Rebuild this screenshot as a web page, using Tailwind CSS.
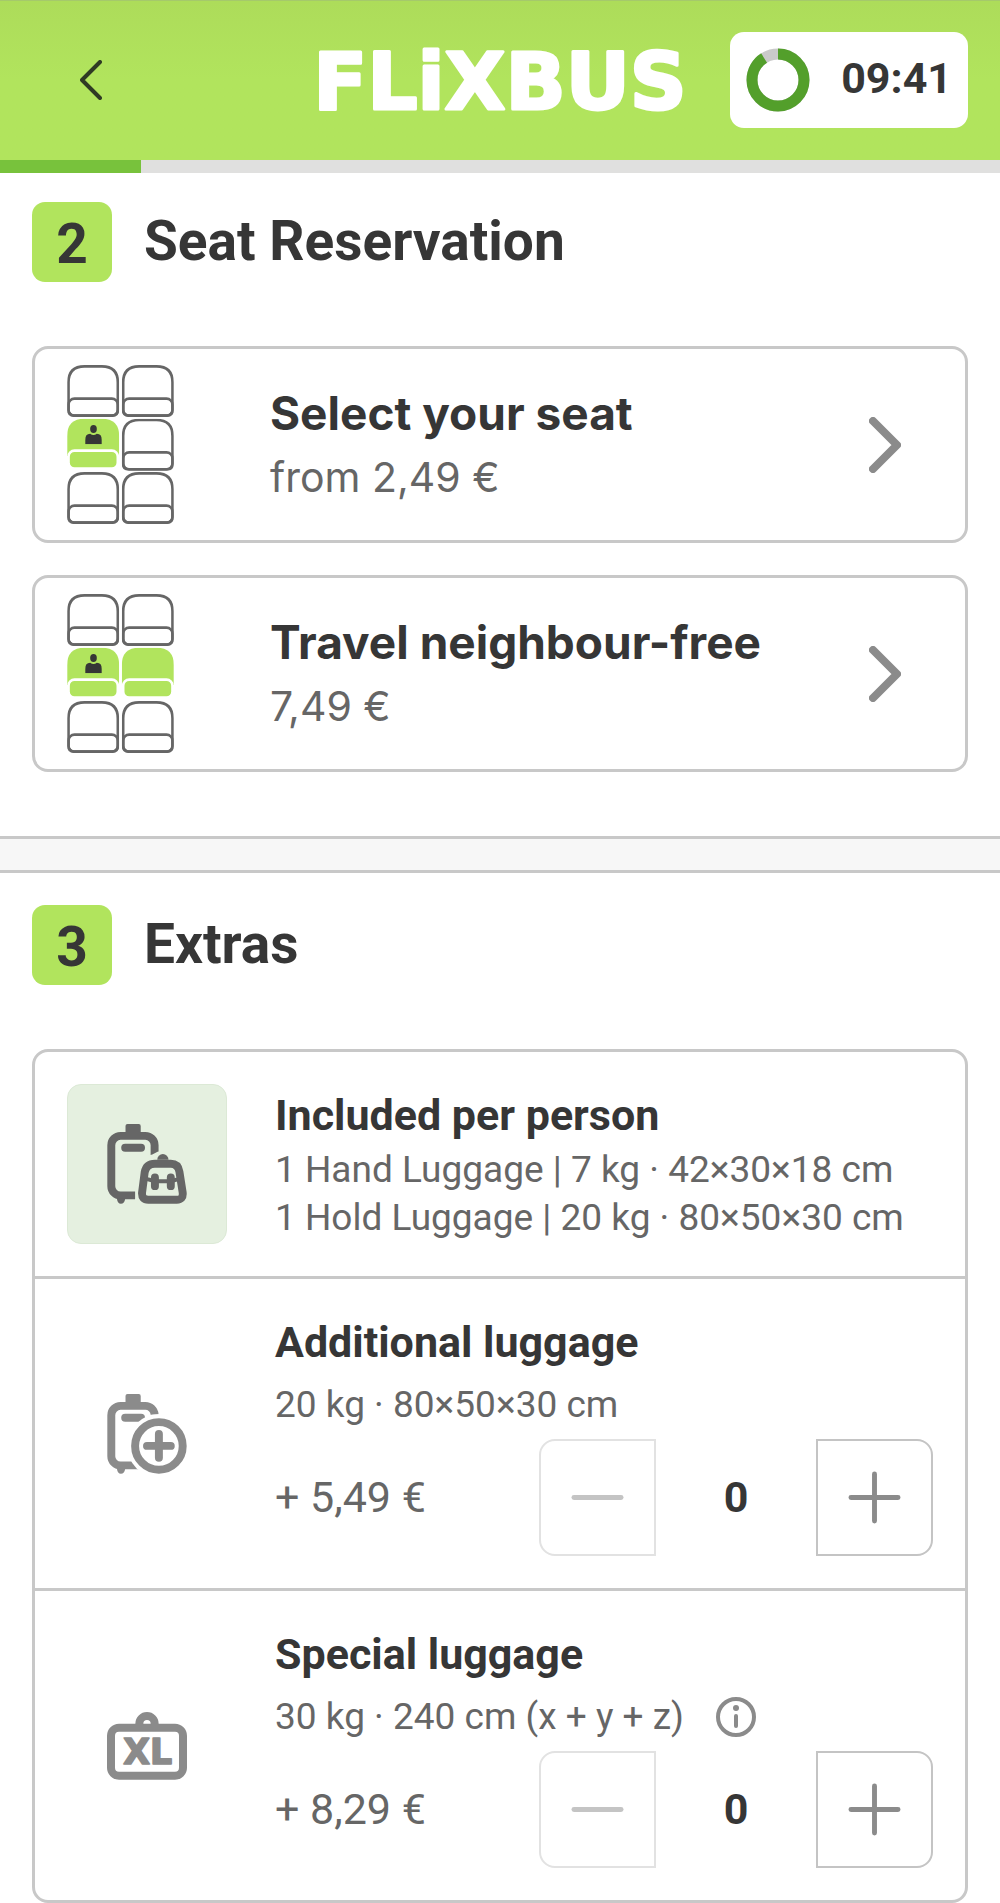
<!DOCTYPE html>
<html lang="en">
<head>
<meta charset="utf-8">
<meta name="viewport" content="width=device-width, initial-scale=1">
<title>FlixBus – Seat Reservation and Extras</title>
<script src="https://cdn.jsdelivr.net/npm/@tailwindcss/browser@4"></script>
</head>
<body class="bg-white font-[Roboto,sans-serif] text-[#363636]">

<!-- Shared drawings -->
<svg class="hidden" aria-hidden="true">
  <symbol id="seat" viewBox="0 0 156 156">
    <g fill="none" stroke="#666" stroke-width="8">
      <path d="M4 52Q4 4 52 4H104Q152 4 152 52V136Q152 152 136 152H20Q4 152 4 136Z"/>
      <rect x="4" y="101" width="148" height="51" rx="18"/>
    </g>
  </symbol>
  <symbol id="seat-taken" viewBox="0 0 156 156">
    <path d="M0 52Q0 0 52 0H104Q156 0 156 52V112H0Z" fill="#b1e45d"/>
    <rect x="4" y="96" width="148" height="54" rx="18" fill="#b1e45d" stroke="#fff" stroke-width="8"/>
  </symbol>
  <symbol id="person" viewBox="0 0 50 58">
    <ellipse cx="25" cy="12" rx="10" ry="12" fill="#363636"/>
    <path d="M0 58V45Q0 26 15 26Q25 34 35 26Q50 26 50 45V58Z" fill="#363636"/>
  </symbol>
</svg>

<header class="grid grid-cols-[1fr_auto_1fr] items-center border-t border-[#a5c96b] bg-[#b1e45d] bg-linear-to-b from-[#addc5a] to-[#b1e45d] to-50% px-8 pt-[31px] pb-8">
  <button type="button" aria-label="Back" class="flex w-fit items-center px-12 py-6">
    <svg class="h-10 w-[22px]" viewBox="0 0 22 40" fill="none" stroke="#2f3a24" stroke-width="4" stroke-linecap="round" stroke-linejoin="round"><path d="M20 2L2 20L20 38"/></svg>
  </button>
  <a href="#" aria-label="FlixBus">
    <svg class="h-24 w-[380px]" viewBox="0 0 380 96">
      <text x="190" y="77" text-anchor="middle" font-family="DejaVu Sans, sans-serif" font-weight="700" font-size="79" fill="#fff" stroke="#fff" stroke-width="3" stroke-linejoin="round">FLiXBUS</text>
    </svg>
  </a>
  <div class="flex h-24 w-[238px] items-center justify-between justify-self-end rounded-[14px] bg-white px-4">
    <svg class="size-16" viewBox="0 0 64 64" fill="none" stroke-width="11">
      <circle cx="32" cy="32" r="26" stroke="#cacaca"/>
      <circle cx="32" cy="32" r="26" stroke="#539f2b" pathLength="100" stroke-dasharray="91 9" transform="rotate(-90 32 32)"/>
    </svg>
    <span class="pb-1 text-[43px] leading-[48px] font-bold">09:41</span>
  </div>
</header>

<div class="h-[13px] bg-[#e0e0df]" role="progressbar" aria-label="Booking progress" aria-valuenow="14" aria-valuemin="0" aria-valuemax="100">
  <div class="h-full bg-[#78c23c]" style="width:14.1%"></div>
</div>

<main>
  <section class="px-8 pt-[29px] pb-16">
    <div class="mb-16 flex items-center gap-8">
      <span class="flex size-20 items-center justify-center rounded-[13px] bg-[#b1e45d] pt-1 text-[55px] leading-none font-bold">2</span>
      <h2 class="pb-0.5 text-[55px] leading-[64px] font-bold">Seat Reservation</h2>
    </div>
    <div class="flex flex-col gap-8">
      <button type="button" class="flex h-[197px] items-center rounded-2xl border-3 border-[#c8c8c8] pr-16 pl-8 text-left">
        <span class="w-[203px] shrink-0">
          <svg class="h-[159px] w-[107px]" viewBox="0 0 320 477">
            <use href="#seat" width="156" height="156"/>
            <use href="#seat" x="164" width="156" height="156"/>
            <use href="#seat-taken" y="161" width="156" height="156"/>
            <use href="#person" x="54" y="180" width="50" height="58"/>
            <use href="#seat" x="164" y="161" width="156" height="156"/>
            <use href="#seat" y="321" width="156" height="156"/>
            <use href="#seat" x="164" y="321" width="156" height="156"/>
          </svg>
        </span>
        <span class="flex flex-1 flex-col font-[Inter,sans-serif] leading-[64px]">
          <span class="text-[46px] font-bold">Select your seat</span>
          <span class="text-[41px] text-[#666]">from 2,49 €</span>
        </span>
        <svg class="h-14 w-8" viewBox="0 0 32 56" fill="none" stroke="#8b8b8b" stroke-width="8" stroke-linecap="round" stroke-linejoin="round"><path d="M4 4L28 28L4 52"/></svg>
      </button>
      <button type="button" class="flex h-[197px] items-center rounded-2xl border-3 border-[#c8c8c8] pr-16 pl-8 text-left">
        <span class="w-[203px] shrink-0">
          <svg class="h-[159px] w-[107px]" viewBox="0 0 320 477">
            <use href="#seat" width="156" height="156"/>
            <use href="#seat" x="164" width="156" height="156"/>
            <use href="#seat-taken" y="161" width="156" height="156"/>
            <use href="#person" x="54" y="180" width="50" height="58"/>
            <use href="#seat-taken" x="164" y="161" width="156" height="156"/>
            <use href="#seat" y="321" width="156" height="156"/>
            <use href="#seat" x="164" y="321" width="156" height="156"/>
          </svg>
        </span>
        <span class="flex flex-1 flex-col font-[Inter,sans-serif] leading-[64px]">
          <span class="text-[46px] font-bold">Travel neighbour-free</span>
          <span class="text-[41px] text-[#666]">7,49 €</span>
        </span>
        <svg class="h-14 w-8" viewBox="0 0 32 56" fill="none" stroke="#8b8b8b" stroke-width="8" stroke-linecap="round" stroke-linejoin="round"><path d="M4 4L28 28L4 52"/></svg>
      </button>
    </div>
  </section>

  <div class="h-[37px] border-y-3 border-[#c8c8c8] bg-[#f7f7f7]"></div>

  <section class="px-8 pt-8">
    <div class="mb-16 flex items-center gap-8">
      <span class="flex size-20 items-center justify-center rounded-[13px] bg-[#b1e45d] pt-1 text-[55px] leading-none font-bold">3</span>
      <h2 class="pb-0.5 text-[55px] leading-[64px] font-bold">Extras</h2>
    </div>

    <div class="divide-y-3 divide-[#c8c8c8] rounded-2xl border-3 border-[#c8c8c8]">
      <article class="flex items-center gap-12 p-8">
        <div class="flex size-40 shrink-0 items-center justify-center rounded-[14px] border border-[#dce9d6] bg-[#e5f0e0]">
          <svg class="size-20" viewBox="0 0 240 242" fill="none" stroke="#666" stroke-width="24">
            <rect x="55" y="0" width="46" height="36" rx="6" fill="#666" stroke="none"/>
            <path d="M143 96V64A28 28 0 0 0 115 36H40A28 28 0 0 0 12 64V188A28 28 0 0 0 40 216H84"/>
            <path d="M29 226H54Q52 241 41 241Q31 241 29 226Z" fill="#666" stroke="none"/>
            <path d="M54 72H102" stroke-linecap="round"/>
            <path d="M84 246L90 190L98 130Q106 96 136 92Q168 70 200 92L220 110V246Z" fill="#e5f0e0" stroke="none"/>
            <path d="M151 108A17 17 0 0 1 185 108Z" fill="#666" stroke="none"/>
            <path d="M144 120H192Q214 120 218 144L228 208Q230 229 210 229H124Q104 229 105 208L113 146Q118 120 144 120Z"/>
            <path d="M118 166L144 173H192L218 166" stroke-width="12"/>
            <path d="M144 162V188M192 162V188" stroke-linecap="round"/>
          </svg>
        </div>
        <div class="h-40">
          <h3 class="text-[43px] leading-[62px] font-bold">Included per person</h3>
          <p class="text-[37px] leading-[48px] text-[#666]">1 Hand Luggage | 7 kg · 42×30×18 cm</p>
          <p class="text-[37px] leading-[48px] text-[#666]">1 Hold Luggage | 20 kg · 80×50×30 cm</p>
        </div>
      </article>

      <article class="flex items-center gap-12 p-8">
        <div class="flex w-40 shrink-0 justify-center">
          <svg class="size-20" viewBox="0 0 240 242" fill="none" stroke="#8b8b8b" stroke-width="24">
            <rect x="55" y="0" width="46" height="36" rx="6" fill="#8b8b8b" stroke="none"/>
            <path d="M143 62A28 28 0 0 0 115 36H40A28 28 0 0 0 12 64V188A28 28 0 0 0 40 216H100"/>
            <path d="M29 226H54Q52 241 41 241Q31 241 29 226Z" fill="#8b8b8b" stroke="none"/>
            <path d="M54 72H102" stroke-linecap="round"/>
            <circle cx="156" cy="157" r="96" fill="#fff" stroke="none"/>
            <circle cx="156" cy="157" r="72"/>
            <path d="M120 157H192M156 121V193" stroke-linecap="round"/>
          </svg>
        </div>
        <div class="flex-1">
          <h3 class="text-[43px] leading-[62px] font-bold">Additional luggage</h3>
          <p class="pt-2 pb-[10px] text-[37px] leading-[48px] text-[#666]">20 kg · 80×50×30 cm</p>
          <div class="flex items-center justify-between">
            <span class="pb-0.5 text-[43px] leading-[48px] text-[#666]">+ 5,49 €</span>
            <div class="flex items-center">
              <button type="button" disabled aria-label="Remove additional luggage" class="flex size-[117px] items-center justify-center rounded-l-2xl border-2 border-[#e2e2e2]">
                <svg class="size-[53px]" viewBox="0 0 54 54" stroke="#c4c4c4" stroke-width="5" stroke-linecap="round"><path d="M3 27H51"/></svg>
              </button>
              <output class="w-40 pb-0.5 text-center text-[43px] leading-[48px] font-bold">0</output>
              <button type="button" aria-label="Add additional luggage" class="flex size-[117px] items-center justify-center rounded-r-2xl border-2 border-[#c4c4c4]">
                <svg class="size-[53px]" viewBox="0 0 54 54" stroke="#8b8b8b" stroke-width="5" stroke-linecap="round"><path d="M3 27H51M27 3V51"/></svg>
              </button>
            </div>
          </div>
        </div>
      </article>

      <article class="flex items-center gap-12 p-8">
        <div class="flex w-40 shrink-0 justify-center">
          <svg class="h-[68px] w-20" viewBox="0 0 240 204" fill="none" stroke="#8b8b8b" stroke-width="24">
            <rect x="12" y="47" width="216" height="144" rx="24"/>
            <path d="M97 40V35A23 23 0 0 1 143 35V40"/>
            <text x="122" y="157" text-anchor="middle" font-family="DejaVu Sans, sans-serif" font-weight="700" font-size="104" fill="#8b8b8b" stroke-width="5" stroke-linejoin="round">XL</text>
          </svg>
        </div>
        <div class="flex-1">
          <h3 class="text-[43px] leading-[62px] font-bold">Special luggage</h3>
          <div class="flex items-center gap-8 pt-2 pb-[10px]">
            <p class="text-[37px] leading-[48px] text-[#666]">30 kg · 240 cm (x + y + z)</p>
            <button type="button" aria-label="About special luggage">
              <svg class="size-10" viewBox="0 0 40 40" fill="none" stroke="#8b8b8b" stroke-width="4" stroke-linecap="round"><circle cx="20" cy="20" r="18"/><path d="M20 19V29"/><circle cx="20" cy="11" r="3" fill="#8b8b8b" stroke="none"/></svg>
            </button>
          </div>
          <div class="flex items-center justify-between">
            <span class="pb-0.5 text-[43px] leading-[48px] text-[#666]">+ 8,29 €</span>
            <div class="flex items-center">
              <button type="button" disabled aria-label="Remove special luggage" class="flex size-[117px] items-center justify-center rounded-l-2xl border-2 border-[#e2e2e2]">
                <svg class="size-[53px]" viewBox="0 0 54 54" stroke="#c4c4c4" stroke-width="5" stroke-linecap="round"><path d="M3 27H51"/></svg>
              </button>
              <output class="w-40 pb-0.5 text-center text-[43px] leading-[48px] font-bold">0</output>
              <button type="button" aria-label="Add special luggage" class="flex size-[117px] items-center justify-center rounded-r-2xl border-2 border-[#c4c4c4]">
                <svg class="size-[53px]" viewBox="0 0 54 54" stroke="#8b8b8b" stroke-width="5" stroke-linecap="round"><path d="M3 27H51M27 3V51"/></svg>
              </button>
            </div>
          </div>
        </div>
      </article>
    </div>
  </section>
</main>
</body>
</html>
